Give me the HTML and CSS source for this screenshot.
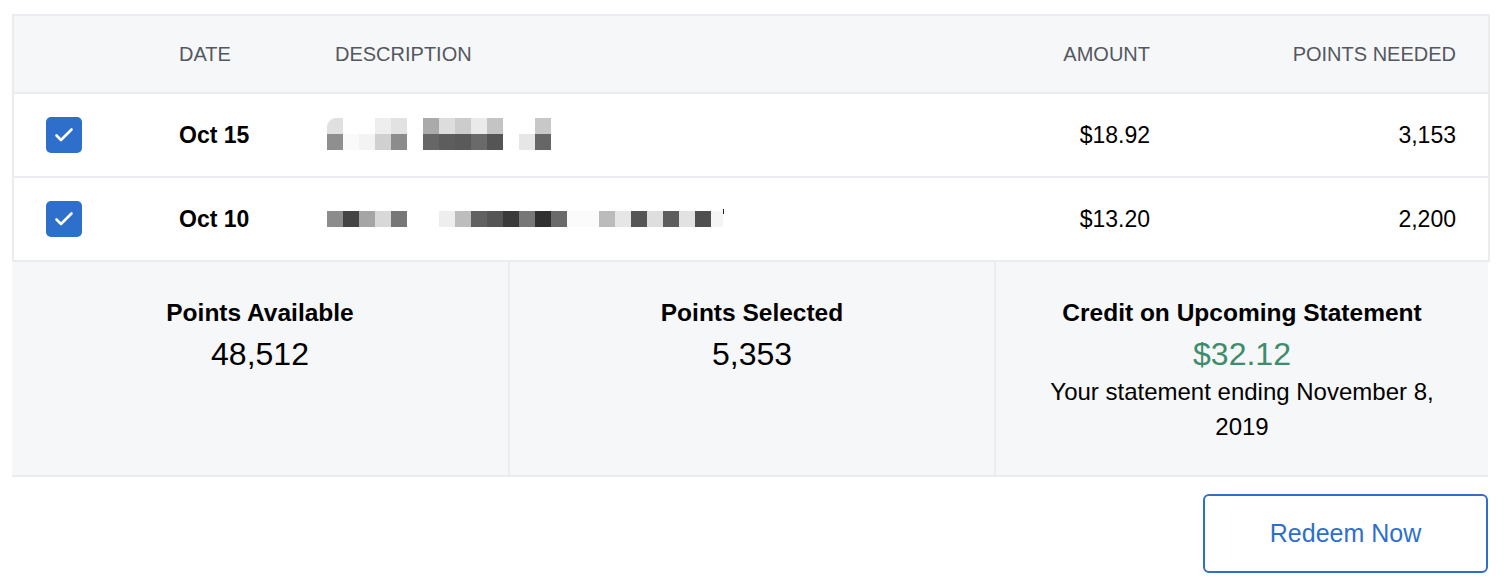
FILE: index.html
```html
<!DOCTYPE html>
<html lang="en">
<head>
<meta charset="utf-8">
<title>Redeem Points</title>
<link rel="stylesheet" href="styles.css">
</head>
<body>
<div class="wrap">
  <div class="table">
    <div class="row head">
      <div></div>
      <div>DATE</div>
      <div>DESCRIPTION</div>
      <div class="num">AMOUNT</div>
      <div class="num">POINTS NEEDED</div>
    </div>
    <div class="row item sep">
      <div><span class="check"><svg viewBox="0 0 36 36" width="36" height="36"><path d="M10.5 18.5 L15 23 L25.5 12.5" fill="none" stroke="#fff" stroke-width="2.6" stroke-linecap="round" stroke-linejoin="round"/></svg></span></div>
      <div class="date">Oct 15</div>
      <div class="desc">
        <div class="pix two">
          <span class="b-e0 rnd"></span><span></span><span></span><span class="b-ee"></span><span class="b-e2"></span><span></span><span class="b-aa"></span><span class="b-dd"></span><span class="b-cc"></span><span class="b-ea"></span><span class="b-c4"></span><span></span><span></span><span class="b-c8"></span>
          <span class="b-8f"></span><span class="b-fa"></span><span class="b-f3"></span><span class="b-d0"></span><span class="b-8c"></span><span></span><span class="b-66"></span><span class="b-5d"></span><span class="b-5a"></span><span class="b-6a"></span><span class="b-55"></span><span></span><span class="b-e6"></span><span class="b-66"></span>
        </div>
      </div>
      <div class="num">$18.92</div>
      <div class="num">3,153</div>
    </div>
    <div class="row item">
      <div><span class="check"><svg viewBox="0 0 36 36" width="36" height="36"><path d="M10.5 18.5 L15 23 L25.5 12.5" fill="none" stroke="#fff" stroke-width="2.6" stroke-linecap="round" stroke-linejoin="round"/></svg></span></div>
      <div class="date">Oct 10</div>
      <div class="desc">
        <div class="pix one">
          <span class="b-8c"></span><span class="b-44"></span><span class="b-a5"></span><span class="b-d8"></span><span class="b-77"></span><span></span><span></span><span class="b-ee"></span><span class="b-bd"></span><span class="b-61"></span><span class="b-55"></span><span class="b-3a"></span><span class="b-77"></span><span class="b-30"></span><span class="b-6a"></span><span class="b-fb"></span><span class="b-fb"></span><span class="b-bb"></span><span class="b-e6"></span><span class="b-55"></span><span class="b-de"></span><span class="b-5d"></span><span class="b-e2"></span><span class="b-4f"></span><span class="b-f5 part"></span><span class="tick"></span>
        </div>
      </div>
      <div class="num">$13.20</div>
      <div class="num">2,200</div>
    </div>
  </div>
  <div class="summary">
    <div class="cell">
      <div class="title">Points Available</div>
      <div class="value">48,512</div>
    </div>
    <div class="cell">
      <div class="title">Points Selected</div>
      <div class="value">5,353</div>
    </div>
    <div class="cell">
      <div class="title">Credit on Upcoming Statement</div>
      <div class="value green">$32.12</div>
      <div class="note">Your statement ending November 8, 2019</div>
    </div>
  </div>
  <div class="actions">
    <button class="redeem">Redeem Now</button>
  </div>
</div>
</body>
</html>
```

FILE: styles.css
```css
html, body {
  margin: 0;
  background: #fff;
}
body {
  padding: 14px 0 0 12px;
  font-family: "Liberation Sans", Arial, sans-serif;
  color: #000;
}
.wrap {
  width: 1478px;
}
.table {
  border: 2px solid #ebecef;
}
.row {
  display: grid;
  grid-template-columns: 133px 156px 1fr 200px 306px;
  align-items: center;
  padding: 0 32px;
}
.row .num {
  text-align: right;
}
.head {
  height: 76px;
  background: #f6f7f9;
  border-bottom: 2px solid #ebecef;
  color: #54585e;
  font-size: 20px;
}
.item {
  height: 82px;
  font-size: 23px;
}
.item.sep {
  border-bottom: 2px solid #ebecef;
}
.date {
  font-weight: 700;
}
.check {
  display: block;
  width: 36px;
  height: 36px;
  border-radius: 5px;
  background: #2d6fcb;
}
.check svg {
  display: block;
}
.desc {
  margin-left: -8px;
}
.pix {
  display: grid;
  grid-auto-columns: 16px;
  grid-template-rows: 16px;
  height: 32px;
}
.pix.two {
  grid-template-columns: repeat(14, 16px);
  grid-template-rows: 16px 16px;
  margin-top: -2px;
}
.pix.one {
  grid-template-columns: repeat(24, 16px) 12px 2px;
  height: 16px;
}
.pix span {
  display: block;
}
.pix .rnd { border-top-left-radius: 9px; }
.pix .tick { background: #222; height: 5px; width: 1px; margin-top: -2px; }
.b-e0 { background: #e0e0e0; }
.b-ee { background: #eeeeee; }
.b-e2 { background: #e2e2e2; }
.b-aa { background: #aaaaaa; }
.b-dd { background: #dddddd; }
.b-cc { background: #cccccc; }
.b-ea { background: #eaeaea; }
.b-c4 { background: #c4c4c4; }
.b-c8 { background: #c8c8c8; }
.b-8f { background: #8f8f8f; }
.b-fa { background: #fafafa; }
.b-f3 { background: #f3f3f3; }
.b-d0 { background: #d0d0d0; }
.b-8c { background: #8c8c8c; }
.b-66 { background: #666666; }
.b-5d { background: #5d5d5d; }
.b-5a { background: #5a5a5a; }
.b-6a { background: #6a6a6a; }
.b-55 { background: #555555; }
.b-e6 { background: #e6e6e6; }
.b-44 { background: #444444; }
.b-a5 { background: #a5a5a5; }
.b-d8 { background: #d8d8d8; }
.b-77 { background: #777777; }
.b-bd { background: #bdbdbd; }
.b-61 { background: #616161; }
.b-3a { background: #3a3a3a; }
.b-30 { background: #303030; }
.b-fb { background: #fbfbfb; }
.b-bb { background: #bbbbbb; }
.b-de { background: #dedede; }
.b-4f { background: #4f4f4f; }
.b-f5 { background: #f5f5f5; }

.summary {
  width: 1476px;
  height: 213px;
  display: grid;
  grid-template-columns: 496px 486px 1fr;
  background: #f6f7f9;
  border-bottom: 2px solid #ebecef;
}
.cell {
  box-sizing: border-box;
  padding: 30px 30px 0;
  text-align: center;
}
.cell + .cell {
  border-left: 2px solid #ebecef;
}
.title {
  font-size: 24.5px;
  font-weight: 700;
  line-height: 42px;
}
.value {
  font-size: 32px;
  line-height: 40px;
}
.green {
  color: #3d8c6c;
}
.note {
  font-size: 24px;
  line-height: 35px;
}
.actions {
  display: flex;
  justify-content: flex-end;
  padding-right: 2px;
  margin-top: 17px;
}
.redeem {
  width: 285px;
  height: 79px;
  border: 2px solid #2e6fcc;
  border-radius: 6px;
  background: #fff;
  color: #2e6fcc;
  font-family: "Liberation Sans", Arial, sans-serif;
  font-size: 25px;
  padding: 0;
  cursor: pointer;
}
```
